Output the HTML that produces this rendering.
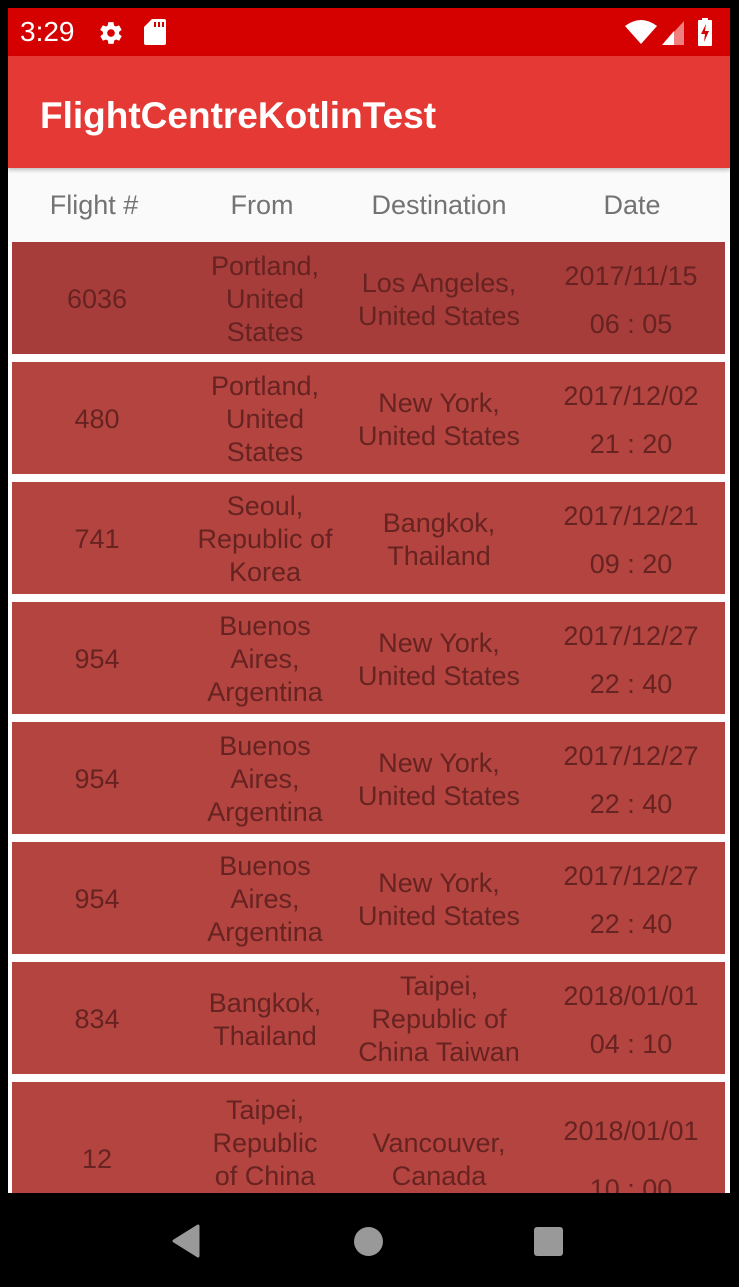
<!DOCTYPE html>
<html><head><meta charset="utf-8"><style>
*{margin:0;padding:0;box-sizing:border-box}
body{width:739px;height:1287px;background:#000;position:relative;overflow:hidden;font-family:"Liberation Sans",Arial,sans-serif}
#screen{position:absolute;left:8px;top:8px;width:722px;height:1279px;background:#fff;overflow:hidden}
#status{position:absolute;left:0;top:0;width:722px;height:48px;background:#d50000;color:#fff}
#appbar{position:absolute;left:0;top:48px;width:722px;height:112px;background:#e53935;color:#fff;font-size:37px;font-weight:bold;padding-left:32px;padding-top:4px;line-height:112px;box-shadow:0 2px 4px rgba(0,0,0,.25);z-index:2}
#hdr{position:absolute;left:0;top:160px;width:722px;height:74px;background:#fafafa;color:#737373;font-size:27px}
.h{position:absolute;top:0;line-height:74px;text-align:center}
.row{position:absolute;left:4px;width:713px;height:112px;background:#b4443f;color:#662321;font-size:27px;padding-top:3px}
.c{position:absolute;top:3px;bottom:0;display:flex;flex-direction:column;justify-content:center;align-items:center;text-align:center;line-height:33px;white-space:nowrap}
.c1{left:0;width:170px}.c2{left:170px;width:166px}.c3{left:336px;width:182px}.c4{left:518px;width:202px;line-height:48px}
#nav{position:absolute;left:0;top:1185px;width:722px;height:100px;background:#000}
</style></head><body>
<div id="screen">
<div id="status">
<div style="position:absolute;left:12px;top:9px;font-size:28px;line-height:30px">3:29</div>
<svg style="position:absolute;left:90px;top:12px" width="26" height="26" viewBox="0 0 24 24"><path fill="#fff" d="M19.4 13c.04-.3.06-.66.06-1s-.02-.7-.06-1l2.1-1.65c.2-.15.24-.42.12-.64l-2-3.46c-.12-.22-.4-.3-.6-.22l-2.5 1c-.52-.4-1.080-.73-1.7-.98L14.4 2.4c-.04-.24-.24-.4-.5-.4h-4c-.25 0-.45.17-.5.4l-.37 2.65c-.6.25-1.17.6-1.7.98l-2.5-1c-.22-.08-.48 0-.6.22l-2 3.46c-.13.22-.07.5.12.64L4.6 11c-.04.3-.07.66-.07 1s.02.7.06 1l-2.1 1.65c-.2.15-.25.42-.13.64l2 3.46c.12.22.4.3.6.22l2.5-1c.52.4 1.08.73 1.7.98l.37 2.65c.05.24.25.4.5.4h4c.25 0 .46-.17.5-.4l.37-2.65c.6-.25 1.17-.58 1.7-.98l2.5 1c.22.08.48 0 .6-.22l2-3.46c.12-.22.07-.5-.12-.64L19.4 13zM12 15.5c-1.930 0-3.5-1.57-3.5-3.5s1.57-3.5 3.5-3.5 3.5 1.57 3.5 3.5-1.57 3.5-3.5 3.5z"/></svg>
<svg style="position:absolute;left:136px;top:11px" width="22" height="26" viewBox="0 0 22 26"><path fill="#fff" d="M8 0h12a2 2 0 0 1 2 2v22a2 2 0 0 1-2 2H2a2 2 0 0 1-2-2V8z"/><rect x="10" y="3" width="2" height="5" fill="#d50000"/><rect x="14" y="3" width="2" height="5" fill="#d50000"/><rect x="18" y="3" width="2" height="5" fill="#d50000"/></svg>
<svg style="position:absolute;left:617px;top:12px" width="32" height="24" viewBox="0 0 32 24"><path fill="#fff" d="M0 6Q16-6 32 6L16 24z"/></svg>
<svg style="position:absolute;left:654px;top:13px" width="22" height="24" viewBox="0 0 22 24"><path fill="#f08080" d="M22 0V24H0z"/><path fill="#fff" d="M12 10V24H0z"/></svg>
<svg style="position:absolute;left:690px;top:10px" width="14" height="28" viewBox="0 0 14 28"><rect x="4" y="0" width="6" height="3" fill="#fff"/><rect x="0" y="2" width="14" height="26" rx="1" fill="#fff"/><path fill="#d50000" d="M8 6L3 16h4l-1 8 5-11H7z"/></svg>
</div>
<div id="appbar">FlightCentreKotlinTest</div>
<div id="hdr">
<div class="h" style="left:0;width:172px">Flight #</div>
<div class="h" style="left:172px;width:164px">From</div>
<div class="h" style="left:336px;width:190px">Destination</div>
<div class="h" style="left:526px;width:196px">Date</div>
</div>

<div class="row" style="top:234px;background:#a63d3a"><div class="c c1">6036</div><div class="c c2">Portland,<br>United<br>States</div><div class="c c3">Los Angeles,<br>United States</div><div class="c c4">2017/11/15<br>06 : 05</div></div>
<div class="row" style="top:354px"><div class="c c1">480</div><div class="c c2">Portland,<br>United<br>States</div><div class="c c3">New York,<br>United States</div><div class="c c4">2017/12/02<br>21 : 20</div></div>
<div class="row" style="top:474px"><div class="c c1">741</div><div class="c c2">Seoul,<br>Republic of<br>Korea</div><div class="c c3">Bangkok,<br>Thailand</div><div class="c c4">2017/12/21<br>09 : 20</div></div>
<div class="row" style="top:594px"><div class="c c1">954</div><div class="c c2">Buenos<br>Aires,<br>Argentina</div><div class="c c3">New York,<br>United States</div><div class="c c4">2017/12/27<br>22 : 40</div></div>
<div class="row" style="top:714px"><div class="c c1">954</div><div class="c c2">Buenos<br>Aires,<br>Argentina</div><div class="c c3">New York,<br>United States</div><div class="c c4">2017/12/27<br>22 : 40</div></div>
<div class="row" style="top:834px"><div class="c c1">954</div><div class="c c2">Buenos<br>Aires,<br>Argentina</div><div class="c c3">New York,<br>United States</div><div class="c c4">2017/12/27<br>22 : 40</div></div>
<div class="row" style="top:954px"><div class="c c1">834</div><div class="c c2">Bangkok,<br>Thailand</div><div class="c c3">Taipei,<br>Republic of<br>China Taiwan</div><div class="c c4">2018/01/01<br>04 : 10</div></div>
<div class="row" style="top:1074px;height:152px"><div class="c c1">12</div><div class="c c2">Taipei,<br>Republic<br>of China<br>Taiwan</div><div class="c c3">Vancouver,<br>Canada</div><div class="c c4" style="line-height:58px">2018/01/01<br>10 : 00</div></div>

<div id="nav">
<svg style="position:absolute;left:163px;top:31px" width="30" height="34" viewBox="0 0 30 34"><path fill="#999" d="M27 2L3 17l24 15z" stroke="#999" stroke-width="3" stroke-linejoin="round"/></svg>
<div style="position:absolute;left:346px;top:34px;width:29px;height:29px;border-radius:50%;background:#999"></div>
<div style="position:absolute;left:526px;top:34px;width:29px;height:29px;border-radius:3px;background:#999"></div>
</div>
</div>
</body></html>
